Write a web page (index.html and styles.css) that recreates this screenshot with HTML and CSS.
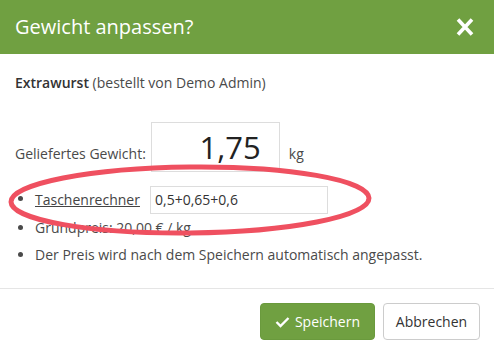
FILE: index.html
```html
<!DOCTYPE html>
<html>
<head>
<meta charset="utf-8">
<link rel="stylesheet" href="styles.css">
</head>
<body>
<div class="modal">
  <div class="modal-header">
    <h1 class="modal-title">Gewicht anpassen?</h1>
    <svg class="close" width="20" height="18" viewBox="0 0 20 18"><path d="M3 1.5 L17 16.5 M17 1.5 L3 16.5" stroke="#fff" stroke-width="3.6" fill="none"/></svg>
  </div>
  <div class="modal-body">
    <p class="product"><strong>Extrawurst</strong> (bestellt von Demo Admin)</p>
    <div class="weight-row">
      <span class="label">Geliefertes Gewicht:</span>
      <div class="big-input">1,75</div>
      <span class="unit">kg</span>
    </div>
    <ul class="info">
      <li class="calc"><a class="link">Taschenrechner</a><div class="calc-input">0,5+0,65+0,6</div></li>
      <li>Grundpreis: 20,00 € / kg</li>
      <li>Der Preis wird nach dem Speichern automatisch angepasst.</li>
    </ul>
    <svg class="mark" width="380" height="80" viewBox="0 0 380 80"><ellipse cx="190" cy="38" rx="179" ry="33" fill="none" stroke="#ef5060" stroke-width="5" transform="rotate(-0.6 190 38)"/></svg>
  </div>
  <div class="modal-footer">
    <button class="btn btn-primary"><svg width="15" height="12" viewBox="0 0 15 12"><path d="M1.5 6 L5.5 10 L13.5 2" stroke="#fff" stroke-width="2.4" fill="none"/></svg>Speichern</button>
    <button class="btn btn-default">Abbrechen</button>
  </div>
</div>
</body>
</html>
```
FILE: styles.css
```css
html, body {
  margin: 0;
  padding: 0;
  background: #fff;
}
body {
  font-family: "Open Sans", sans-serif;
  font-size: 14px;
  color: #4a4a4a;
}
.modal {
  width: 494px;
  height: 356px;
  background: #fff;
}
.modal-header {
  height: 54px;
  background: #70a041;
  display: flex;
  align-items: center;
  justify-content: space-between;
  padding: 0 19px 0 15px;
  box-sizing: border-box;
}
.modal-title {
  margin: 0;
  font-size: 20px;
  font-weight: 400;
  color: #fff;
  line-height: 24px;
}
.close {
  display: block;
}
.modal-body {
  position: relative;
  padding: 20px 15px 24px;
  border-bottom: 1px solid #e5e5e5;
}
.product {
  margin: 0;
  line-height: 18px;
}
.product strong {
  font-weight: 600;
  color: #333;
}
.weight-row {
  display: flex;
  align-items: baseline;
  margin-top: 30px;
}
.label {
  margin-right: 5px;
}
.big-input {
  width: 129px;
  height: 50px;
  box-sizing: border-box;
  border: 1px solid #ddd;
  font-size: 31px;
  line-height: 48px;
  text-align: right;
  padding: 0 18px 0 10px;
  color: #222;
}
.unit {
  margin-left: 9px;
}
.info {
  margin: 13px 0 0;
  padding-left: 20px;
}
.info li {
  line-height: 18px;
  margin-bottom: 9px;
}
.info li:last-child {
  margin-bottom: 0;
}
.info li.calc {
  line-height: 28px;
  margin-bottom: 5px;
}
.link {
  display: inline-block;
  vertical-align: middle;
  text-decoration: underline;
  color: #444;
  width: 115px;
  line-height: 28px;
}
.calc-input {
  display: inline-block;
  vertical-align: middle;
  width: 178px;
  height: 28px;
  box-sizing: border-box;
  border: 1px solid #ddd;
  line-height: 26px;
  padding: 0 4px;
  color: #333;
}
.mark {
  position: absolute;
  left: 0;
  top: 108px;
}
.modal-footer {
  display: flex;
  justify-content: flex-end;
  gap: 8px;
  padding: 14px 14px 0;
}
.btn {
  font-family: "Open Sans", sans-serif;
  font-size: 14px;
  height: 37px;
  border-radius: 4px;
  display: flex;
  align-items: center;
  justify-content: center;
  box-sizing: border-box;
  cursor: pointer;
}
.btn-primary {
  width: 115px;
  background: #70a041;
  border: 1px solid #6a9a3d;
  color: #fff;
  gap: 5px;
}
.btn-default {
  width: 97px;
  background: #fff;
  border: 1px solid #ccc;
  color: #333;
}
```
